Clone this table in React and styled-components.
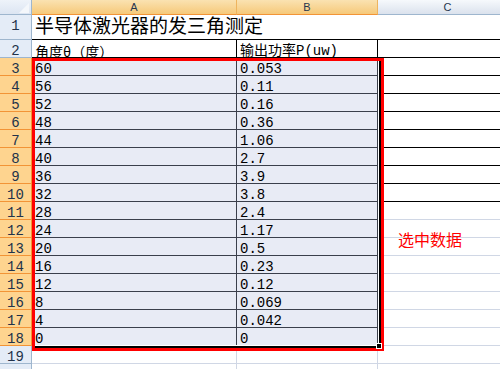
import styled, { createGlobalStyle } from 'styled-components';

const GlobalStyle = createGlobalStyle`
  html, body {
    margin: 0;
    padding: 0;
    background: #fff;
    overflow: hidden;
  }
`;

const Wrap = styled.div`
  position: relative;
  width: 500px;
  height: 369px;
  overflow: hidden;
  font-family: "Liberation Mono", "Noto Sans CJK SC", monospace;
  color: #000;
`;

const Sheet = styled.div`
  display: grid;
  grid-template-columns: 32px 205px 141px 140px;
  grid-template-rows: 15px 25px 18px repeat(18, 18px);
`;

const Corner = styled.div`
  position: relative;
  background: linear-gradient(#eef3fa, #dce5f2);
  border-right: 1px solid #9eb6ce;
  border-bottom: 1px solid #9eb6ce;
  svg {
    position: absolute;
    right: 2px;
    bottom: 1px;
  }
`;

const ColHead = styled.div`
  display: flex;
  align-items: center;
  justify-content: center;
  font-family: "Liberation Sans", sans-serif;
  font-size: 11px;
  color: #27364d;
  background: ${p => p.$sel
    ? 'linear-gradient(#fae2b1, #f6c97a)'
    : 'linear-gradient(#f6f9fc, #dbe2ed)'};
  border-right: 1px solid ${p => p.$sel ? '#eeb45e' : '#9eb6ce'};
  border-bottom: 1px solid ${p => p.$sel ? '#f29436' : '#9eb6ce'};
`;

const RowHead = styled.div`
  display: flex;
  justify-content: center;
  padding-top: 3px;
  line-height: 17px;
  font-size: 14px;
  color: #22324a;
  background: ${p => p.$sel ? '#fed48f' : '#e4ecf7'};
  border-right: 1px solid ${p => p.$sel ? '#f29436' : '#9eb6ce'};
  border-bottom: 1px solid ${p => p.$sel ? '#f29436' : '#9eb6ce'};
  box-sizing: border-box;
`;

const lines = {
  black: '#000',
  sel: '#3a3f4b',
  grid: '#d0d7e5',
  none: '#fff',
};

const Cell = styled.div`
  box-sizing: border-box;
  padding: 3px 3px 0;
  line-height: 17px;
  font-size: 14px;
  white-space: nowrap;
  font-family: ${p => p.$cjk
    ? '"Noto Sans CJK SC", "Liberation Mono", sans-serif'
    : 'inherit'};
  background: ${p => p.$sel ? '#e8ebf5' : '#fff'};
  border-right: 1px solid ${p => lines[p.$right || 'none']};
  border-bottom: 1px solid ${p => lines[p.$bottom || 'none']};
`;

const Title = styled(Cell)`
  grid-column: span 3;
  padding-top: 2px;
  font-size: 19px;
  line-height: 22px;
`;

const Selection = styled.div`
  position: absolute;
  left: 32px;
  top: 58px;
  width: 352px;
  height: 293px;
  box-sizing: border-box;
  border: 3px solid #ff0000;
`;

const SelFrame = styled.div`
  position: absolute;
  inset: 0;
  border-right: 2px solid #000;
  border-bottom: 2px solid #000;
  box-shadow: inset -1px -1px 0 #fff;
  &::after {
    content: "";
    position: absolute;
    right: -3px;
    bottom: -3px;
    width: 4px;
    height: 4px;
    background: #000;
    border: 1px solid #fff;
  }
`;

const Note = styled.div`
  position: absolute;
  left: 398px;
  top: 230px;
  font-family: "Noto Sans CJK SC", sans-serif;
  font-size: 16px;
  line-height: 18px;
  color: #ff0000;
`;

const angles = [60, 56, 52, 48, 44, 40, 36, 32, 28, 24, 20, 16, 12, 8, 4, 0];
const power = ['0.053', '0.11', '0.16', '0.36', '1.06', '2.7', '3.9', '3.8', '2.4', '1.17', '0.5', '0.23', '0.12', '0.069', '0.042', '0'];

export default function App() {
  return (
    <Wrap>
      <GlobalStyle />
      <Sheet>
        <Corner>
          <svg width="10" height="10" viewBox="0 0 10 10">
            <polygon points="10,0 10,10 0,10" fill="#f4f7fb" />
          </svg>
        </Corner>
        <ColHead $sel>A</ColHead>
        <ColHead $sel>B</ColHead>
        <ColHead>C</ColHead>

        <RowHead>1</RowHead>
        <Title $bottom="black">半导体激光器的发三角测定</Title>

        <RowHead>2</RowHead>
        <Cell $cjk $right="black" $bottom="black">角度θ（度）</Cell>
        <Cell $right="black" $bottom="black">输出功率P(uw)</Cell>
        <Cell $right="black" $bottom="black" />

        {angles.map((a, i) => (
          <Row key={i} n={i + 3} a={a} p={power[i]} />
        ))}

        <RowHead>19</RowHead>
        <Cell $right="grid" $bottom="grid" />
        <Cell $right="grid" $bottom="grid" />
        <Cell $right="grid" $bottom="grid" />

        <RowHead />
        <Cell $right="grid" $bottom="grid" />
        <Cell $right="grid" $bottom="grid" />
        <Cell $right="grid" $bottom="grid" />
      </Sheet>
      <Selection>
        <SelFrame />
      </Selection>
      <Note>选中数据</Note>
    </Wrap>
  );
}

function Row({ n, a, p }) {
  return (
    <>
      <RowHead $sel>{n}</RowHead>
      <Cell $sel $right="sel" $bottom="sel">{a}</Cell>
      <Cell $sel $right="sel" $bottom="sel">{p}</Cell>
      <Cell $right="grid" $bottom={n <= 10 ? 'black' : 'grid'} />
    </>
  );
}
